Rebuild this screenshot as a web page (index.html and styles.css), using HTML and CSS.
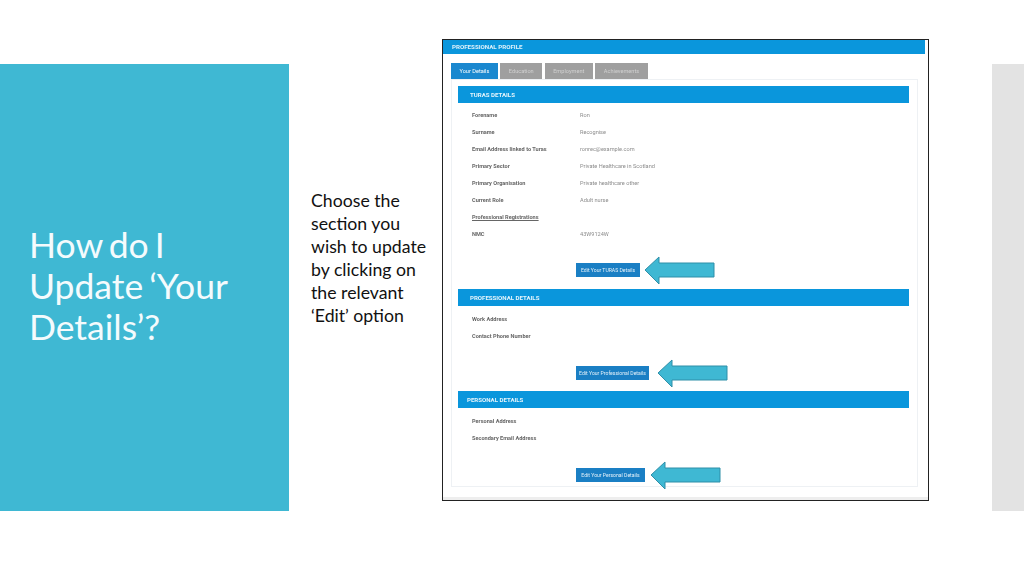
FILE: index.html
```html
<!DOCTYPE html>
<html lang="en">

<head>
    <meta charset="UTF-8">
    <title>How do I Update 'Your Details'?</title>
    <link rel="stylesheet" href="styles.css">
</head>

<body>
    <div class="slide">
        <div class="title-panel">
            <h1>How do I Update ‘Your Details’?</h1>
        </div>
        <div class="slide-text">Choose the section you wish to update by clicking on the relevant ‘Edit’ option</div>
        <div class="profile-shot">
            <div class="profile-header">PROFESSIONAL PROFILE</div>
            <div class="tabs">
                <div class="tab active">Your Details</div>
                <div class="tab">Education</div>
                <div class="tab">Employment</div>
                <div class="tab">Achievements</div>
            </div>
            <div class="tab-body">
                <div class="section-bar">TURAS DETAILS</div>
                <div class="rows">
                    <div class="row"><span class="label">Forename</span><span class="value">Ron</span></div>
                    <div class="row"><span class="label">Surname</span><span class="value">Recognise</span></div>
                    <div class="row"><span class="label">Email Address linked to Turas</span><span class="value">ronrec@example.com</span></div>
                    <div class="row"><span class="label">Primary Sector</span><span class="value">Private Healthcare in Scotland</span></div>
                    <div class="row"><span class="label">Primary Organisation</span><span class="value">Private healthcare other</span></div>
                    <div class="row"><span class="label">Current Role</span><span class="value">Adult nurse</span></div>
                    <div class="row"><span class="label underline">Professional Registrations</span></div>
                    <div class="row"><span class="label">NMC</span><span class="value">43W9124W</span></div>
                </div>
                <div class="action action-turas">
                    <div class="edit-btn btn-turas">Edit Your TURAS Details</div>
                    <svg class="arrow" width="71" height="29" viewBox="0 0 71 29"><path d="M1 14 L15 1 V7 H70 V21 H15 V28 Z" fill="#3fb8d3" stroke="#2f8fa8"/></svg>
                </div>
                <div class="section-bar">PROFESSIONAL DETAILS</div>
                <div class="rows rows-short">
                    <div class="row"><span class="label">Work Address</span></div>
                    <div class="row"><span class="label">Contact Phone Number</span></div>
                </div>
                <div class="action action-prof">
                    <div class="edit-btn btn-prof">Edit Your Professional Details</div>
                    <svg class="arrow" width="71" height="29" viewBox="0 0 71 29"><path d="M1 14 L15 1 V7 H70 V21 H15 V28 Z" fill="#3fb8d3" stroke="#2f8fa8"/></svg>
                </div>
                <div class="section-bar bar-personal">PERSONAL DETAILS</div>
                <div class="rows rows-short">
                    <div class="row"><span class="label">Personal Address</span></div>
                    <div class="row"><span class="label">Secondary Email Address</span></div>
                </div>
                <div class="action action-personal">
                    <div class="edit-btn btn-personal">Edit Your Personal Details</div>
                    <svg class="arrow" width="71" height="29" viewBox="0 0 71 29"><path d="M1 14 L15 1 V7 H70 V21 H15 V28 Z" fill="#3fb8d3" stroke="#2f8fa8"/></svg>
                </div>
            </div>
        </div>
        <div class="side-strip"></div>
    </div>
</body>

</html>
```

FILE: styles.css
```css
body {
    margin: 0;
    background-color: white;
    font-family: 'Lato', sans-serif;
}

.slide {
    width: 1024px;
    height: 576px;
    overflow: hidden;
    display: grid;
    grid-template-columns: 289px 153px 487px 1fr;
}

.title-panel {
    margin-top: 64px;
    height: 447px;
    background-color: #3fb8d3;
    display: flex;
    align-items: center;
    padding: 0 0 5px 29px;
    box-sizing: border-box;
}

.title-panel h1 {
    margin: 0;
    width: 225px;
    font-size: 35.5px;
    font-weight: 400;
    line-height: 41px;
    word-spacing: -3px;
    color: #f4fbfd;
}

.slide-text {
    margin-top: 189px;
    padding-left: 22px;
    width: 122px;
    font-size: 17.7px;
    line-height: 23.1px;
    color: #111;
}

.profile-shot {
    margin-top: 39px;
    width: 487px;
    height: 462px;
    box-sizing: border-box;
    border: 1px solid #222;
    background-color: white;
    box-shadow: inset 0 -3px 0 #eee;
    font-family: 'Roboto', sans-serif;
    font-size: 5.6px;
    filter: blur(0.3px);
}

.profile-header {
    height: 14px;
    margin-right: 3px;
    padding-left: 9px;
    line-height: 14px;
    background-color: #0a96dc;
    color: #dff2fb;
    font-size: 6.2px;
    font-weight: bold;
}

.tabs {
    display: flex;
    gap: 2.5px;
    margin: 9px 10px 0 8px;
    height: 16px;
}

.tab {
    padding: 0 8.5px;
    line-height: 16px;
    background-color: #9f9f9f;
    color: #d0d0d0;
}

.tab.active {
    background-color: #1a88cf;
    color: white;
}

.tab-body {
    margin: 0 10px 0 8px;
    height: 408px;
    box-sizing: border-box;
    border: 1px solid #eef1f4;
    padding: 6px 8px 0 6px;
}

.section-bar {
    height: 17px;
    padding-left: 12px;
    line-height: 17px;
    background-color: #0a96dc;
    color: #e6f5fc;
    font-size: 6.1px;
    font-weight: bold;
}

.bar-personal {
    padding-left: 9px;
}

.rows {
    padding: 4px 0 0 14px;
}

.rows-short {
    padding-top: 5px;
}

.row {
    display: flex;
    height: 17px;
    line-height: 17px;
}

.label {
    width: 108px;
    color: #666;
    font-weight: bold;
}

.underline {
    text-decoration: underline;
}

.value {
    color: #8c8c8c;
}

.action {
    display: flex;
    align-items: center;
    height: 46px;
    box-sizing: border-box;
    padding: 10px 0 0 118px;
}

.action-turas {
    padding-top: 8px;
    gap: 4px;
}

.action-prof {
    gap: 8px;
}

.action-personal {
    gap: 5px;
}

.edit-btn {
    height: 14px;
    line-height: 14px;
    text-align: center;
    background-color: #1a7fc4;
    color: #e4f1fa;
    font-size: 5.1px;
}

.btn-turas {
    width: 64px;
}

.btn-prof {
    width: 73px;
}

.btn-personal {
    width: 69px;
}

.side-strip {
    margin: 64px 0 0 63px;
    height: 447px;
    background-color: #e3e3e3;
}
```
